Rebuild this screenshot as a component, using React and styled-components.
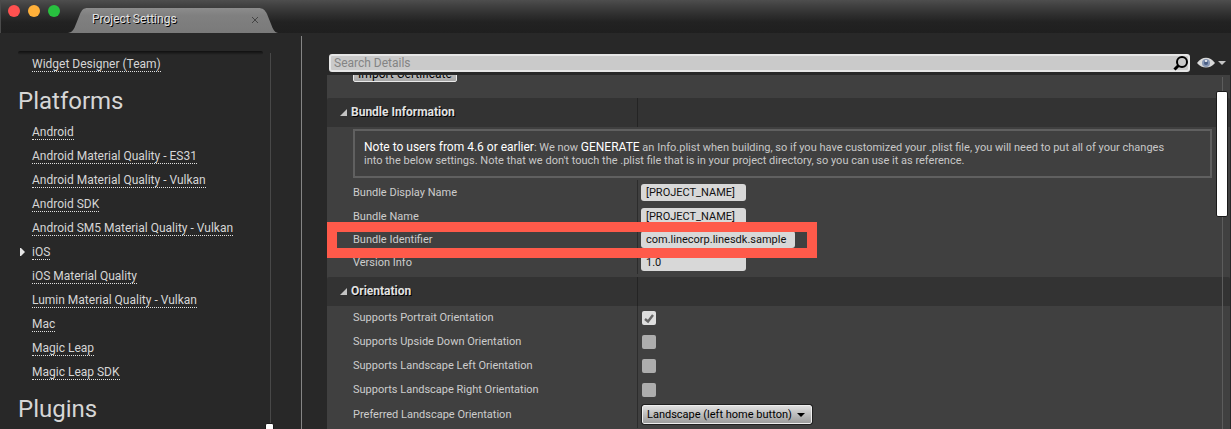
import React from "react";
import styled, { createGlobalStyle } from "styled-components";

const Global = createGlobalStyle`
  * { box-sizing: border-box; }
  body { margin: 0; background: #282828; color: #d6d6d6; font-family: Roboto, "Liberation Sans", sans-serif; font-size: 11px; }
  button, input, select { font: inherit; }
`;

const Window = styled.div`
  min-height: 100vh;
  display: flex;
  flex-direction: column;
  overflow: hidden;
`;

const TitleBar = styled.header`
  height: 33px;
  display: flex;
  align-items: flex-end;
  border-left: 1px solid #4a4a4a;
  background: linear-gradient(#4e4e4e 0, #424242 5px, #303030 14px, #222 22px, #1f1f1f 100%);
`;

const Lights = styled.div`
  align-self: flex-start;
  display: flex;
  gap: 8px;
  width: 67px;
  padding: 5px 0 0 7px;
`;

const Light = styled.button`
  width: 12px;
  height: 12px;
  padding: 0;
  border: 0;
  border-radius: 50%;
  background: ${(p) => p.$color};
`;

const Tab = styled.div`
  position: relative;
  z-index: 0;
  width: 210px;
  height: 25px;
  display: flex;
  align-items: center;
  justify-content: space-between;
  padding: 0 18px 4px 24px;
  color: #e2e2e2;
  font-size: 12px;
  text-shadow: 1px 1px 0 #000;
`;

const TabShape = styled.svg`
  position: absolute;
  inset: 0;
  z-index: -1;
`;

const TabClose = styled.button`
  width: 10px;
  height: 10px;
  margin-top: 2px;
  padding: 2px;
  border: 0;
  background: none;
  display: flex;
`;

const Body = styled.div`
  flex: 1;
  display: flex;
  padding-top: 3px;
`;

const Sidebar = styled.nav`
  position: relative;
  flex: none;
  width: 302px;
  padding: 15px 38px 0 18px;
  border-right: 1px solid #858585;
`;

const ScrollShade = styled.div`
  height: 4px;
  margin-bottom: -3px;
  background: linear-gradient(#101010, #282828);
  border-radius: 2px;
`;

const Heading = styled.h2`
  margin: 0;
  height: 44px;
  padding-top: 11px;
  font-size: 24px;
  font-weight: 400;
  line-height: 28px;
`;

const LinkList = styled.ul`
  list-style: none;
  margin: 0;
  padding: 0;
`;

const LinkRow = styled.li`
  height: 24px;
  display: flex;
  align-items: center;
`;

const Marker = styled.span`
  width: 14px;
  padding-left: 2px;
  display: flex;
`;

const SideLink = styled.a`
  color: inherit;
  font-size: 12px;
  line-height: 14px;
  text-decoration: none;
  border-bottom: 1px dotted #e0e0e0;
`;

const Track = styled.div`
  position: absolute;
  top: ${(p) => p.$top}px;
  bottom: 0;
  right: ${(p) => p.$right}px;
  width: 1px;
  background: ${(p) => p.$color};
`;

const Thumb = styled.div`
  position: absolute;
  left: ${(p) => p.$left}px;
  top: ${(p) => p.$top};
  width: ${(p) => p.$width}px;
  height: 126px;
  background: #fff;
  border: 1px solid #1a1a1a;
  border-radius: 2px;
`;

const Details = styled.main`
  flex: 1;
  min-width: 0;
  display: flex;
  flex-direction: column;
  padding: 18px 1px 0 25px;
`;

const SearchBar = styled.form`
  display: flex;
  align-items: center;
  gap: 7px;
  padding: 0 4px 0 2px;
`;

const SearchBox = styled.label`
  flex: 1;
  height: 18px;
  display: flex;
  align-items: center;
  background: #cacaca;
  border: 2px solid #e6e6e6;
  border-radius: 3px;
`;

const SearchInput = styled.input`
  flex: 1;
  min-width: 0;
  height: 14px;
  padding: 0 3px;
  border: 0;
  background: none;
  font-size: 12px;
  &::placeholder { color: #848484; opacity: 1; }
`;

const ViewButton = styled.button`
  display: flex;
  align-items: center;
  gap: 3px;
  padding: 0;
  border: 0;
  background: none;
`;

const Panel = styled.div`
  position: relative;
  flex: 1;
  margin-top: 3px;
  background: #404040;
`;

const ScrolledRow = styled.div`
  height: 23px;
  display: flex;
  align-items: flex-end;
  padding: 0 26px 16px;
  overflow: hidden;
`;

const ImportButton = styled.button`
  flex: none;
  width: 104px;
  height: 20px;
  padding: 3px 0 0;
  color: #000;
  font-size: 12px;
  line-height: 14px;
  border: 1px solid #e8e8e8;
  border-radius: 2px;
  background: linear-gradient(#d8d8d8, #a6a6a6);
`;

const SectionTitle = styled.h3`
  margin: 0;
  height: 29px;
  display: flex;
  align-items: center;
  background: #333;
  border-radius: 2px 2px 0 0;
  color: #e2e2e2;
  font-size: 12px;
  font-weight: 700;
  text-shadow: 1px 1px 0 #000;
`;

const TitleCell = styled.span`
  width: 311px;
  height: 100%;
  display: flex;
  align-items: center;
  gap: 4px;
  padding: 0 0 1px 13px;
  border-right: 1px solid #242424;
`;

const SectionBody = styled.div`
  padding: ${(p) => p.$pad};
`;

const Note = styled.p`
  margin: 0 18px 2px 26px;
  height: 49px;
  padding: 10px 32px 0 9px;
  border: 2px solid #606060;
  color: #c8c8c8;
  line-height: 13px;
`;

const Strong = styled.strong`
  color: #fff;
  font-size: 12px;
  font-weight: 400;
`;

const Row = styled.div`
  position: relative;
  height: ${(p) => p.$height || 24}px;
  display: flex;
`;

const Name = styled.label`
  width: 311px;
  display: flex;
  align-items: center;
  padding-left: 26px;
  color: #cdcdcd;
  border-right: 1px solid #2c2c2c;
`;

const Value = styled.div`
  display: flex;
  align-items: center;
  padding-left: 3px;
`;

const Field = styled.input`
  width: ${(p) => p.$width}px;
  height: 17px;
  padding: 0 5px;
  border: 0;
  border-radius: 3px;
  background: #d8d8d8;
  color: #111;
`;

const CheckWrap = styled.span`
  position: relative;
  display: flex;
  margin: 1px 0 0 1px;
`;

const Check = styled.input`
  appearance: none;
  width: 14px;
  height: 14px;
  margin: 0;
  border-radius: 2px;
  background: #adadad;
  &:checked { background: #dedede; }
  & + svg { display: none; }
  &:checked + svg { display: block; }
`;

const CheckMark = styled.svg`
  position: absolute;
  inset: 0;
  pointer-events: none;
`;

const SelectWrap = styled.span`
  position: relative;
  display: flex;
  margin-left: 1px;
`;

const Select = styled.select`
  appearance: none;
  width: 170px;
  height: 19px;
  padding: 0 0 0 4px;
  border: 1px solid #eee;
  border-radius: 2px;
  outline: 1px solid #1f1f1f;
  background: linear-gradient(#dedede, #9c9c9c);
  color: #000;
`;

const SelectArrow = styled.svg`
  position: absolute;
  right: 7px;
  top: 8px;
  pointer-events: none;
`;

const Highlight = styled.div`
  position: absolute;
  left: 0;
  top: -6px;
  bottom: -7px;
  width: 490px;
  border: 10px solid #ff5a4a;
  pointer-events: none;
  z-index: 1;
`;

const platforms = [
  "Android",
  "Android Material Quality - ES31",
  "Android Material Quality - Vulkan",
  "Android SDK",
  "Android SM5 Material Quality - Vulkan",
  "iOS",
  "iOS Material Quality",
  "Lumin Material Quality - Vulkan",
  "Mac",
  "Magic Leap",
  "Magic Leap SDK",
];

const bundle = [
  { id: "display", label: "Bundle Display Name", value: "[PROJECT_NAME]", width: 105, height: 24 },
  { id: "name", label: "Bundle Name", value: "[PROJECT_NAME]", width: 105, height: 24 },
  { id: "identifier", label: "Bundle Identifier", value: "com.linecorp.linesdk.sample", width: 154, height: 23, marked: true },
  { id: "version", label: "Version Info", value: "1.0", width: 105, height: 23 },
];

const orientations = [
  { id: "portrait", label: "Supports Portrait Orientation", on: true, height: 23 },
  { id: "upside", label: "Supports Upside Down Orientation" },
  { id: "left", label: "Supports Landscape Left Orientation" },
  { id: "right", label: "Supports Landscape Right Orientation" },
];

function NavLink({ label, active }) {
  return (
    <LinkRow>
      <Marker>
        {active && (
          <svg width="5" height="8" viewBox="0 0 5 8"><path d="M0 0h1l4 4-4 4H0z" fill="#e6e6e6" /></svg>
        )}
      </Marker>
      <SideLink href="#" aria-current={active ? "page" : undefined}>{label}</SideLink>
    </LinkRow>
  );
}

function Section({ title, pad, children }) {
  return (
    <section>
      <SectionTitle>
        <TitleCell>
          <svg width="7" height="7" viewBox="0 0 7 7"><path d="M7 0v7H0z" fill="#c4c4c4" /></svg>
          {title}
        </TitleCell>
      </SectionTitle>
      <SectionBody $pad={pad}>{children}</SectionBody>
    </section>
  );
}

export default function App() {
  return (
    <Window>
      <Global />
      <TitleBar>
        <Lights>
          <Light $color="#ff5150" aria-label="Close" />
          <Light $color="#ffb03a" aria-label="Minimize" />
          <Light $color="#28c13f" aria-label="Zoom" />
        </Lights>
        <Tab>
          <TabShape width="210" height="25" viewBox="0 0 210 25">
            <defs>
              <linearGradient id="tab" x1="0" y1="0" x2="0" y2="1">
                <stop offset="0" stopColor="#8c8c8c" />
                <stop offset="0.3" stopColor="#808080" />
                <stop offset="1" stopColor="#7a7a7a" />
              </linearGradient>
            </defs>
            <path d="M0 25C5 24 6 21 8 16L12 6C14 2 15 0 20 0H190C195 0 197 2 199 6L203 16C205 21 206 24 210 25Z" fill="url(#tab)" />
          </TabShape>
          Project Settings
          <TabClose aria-label="Close tab">
            <svg width="6" height="6" viewBox="0 0 6 6"><path d="M0 0L6 6M6 0L0 6" stroke="#444" /></svg>
          </TabClose>
        </Tab>
      </TitleBar>
      <Body>
        <Sidebar>
          <ScrollShade />
          <LinkList><NavLink label="Widget Designer (Team)" /></LinkList>
          <Heading>Platforms</Heading>
          <LinkList>
            {platforms.map((p) => <NavLink key={p} label={p} active={p === "iOS"} />)}
          </LinkList>
          <Heading>Plugins</Heading>
          <Track $top={17} $right={30} $color="#484848"><Thumb $top="calc(100% - 6px)" $left={-5} $width={9} /></Track>
        </Sidebar>
        <Details>
          <SearchBar>
            <SearchBox>
              <SearchInput type="text" placeholder="Search Details" aria-label="Search Details" />
              <svg width="15" height="15" viewBox="0 0 15 15" fill="none" stroke="#000">
                <circle cx="9" cy="6" r="5" strokeWidth="2" /><path d="M5.5 9.5L1.5 13.5" strokeWidth="3" />
              </svg>
            </SearchBox>
            <ViewButton type="button" aria-label="View options">
              <svg width="18" height="12" viewBox="0 0 18 12">
                <path d="M0 6C5-1 13-1 18 6C13 12 5 12 0 6Z" fill="#dadada" />
                <circle cx="9" cy="6" r="4" fill="#8797b4" /><circle cx="9" cy="6" r="2" fill="#485d84" /><circle cx="9" cy="4" r="1" fill="#fff" />
              </svg>
              <svg width="8" height="4" viewBox="0 0 8 4"><path d="M0 0h8L4 4z" fill="#c4c4c4" /></svg>
            </ViewButton>
          </SearchBar>
          <Panel>
            <ScrolledRow><ImportButton>Import Certificate</ImportButton></ScrolledRow>
            <Section title="Bundle Information" pad="2px 0 3px">
              <Note>
                <Strong>Note to users from 4.6 or earlier</Strong>: We now <Strong>GENERATE</Strong> an Info.plist when building, so if you have customized your .plist file, you will need to put all of your changes into the below settings. Note that we don't touch the .plist file that is in your project directory, so you can use it as reference.
              </Note>
              {bundle.map((b) => (
                <Row key={b.id} $height={b.height}>
                  <Name htmlFor={b.id}>{b.label}</Name>
                  <Value><Field id={b.id} type="text" defaultValue={b.value} $width={b.width} /></Value>
                  {b.marked && <Highlight />}
                </Row>
              ))}
            </Section>
            <Section title="Orientation" pad="0">
              {orientations.map((o) => (
                <Row key={o.id} $height={o.height}>
                  <Name htmlFor={o.id}>{o.label}</Name>
                  <Value>
                    <CheckWrap>
                      <Check id={o.id} type="checkbox" defaultChecked={o.on} />
                      <CheckMark width="14" height="14" viewBox="0 0 14 14"><path d="M3 8L6 10.5L11 4" fill="none" stroke="#666" strokeWidth="2.4" /></CheckMark>
                    </CheckWrap>
                  </Value>
                </Row>
              ))}
              <Row $height={27}>
                <Name htmlFor="preferred">Preferred Landscape Orientation</Name>
                <Value>
                  <SelectWrap>
                    <Select id="preferred"><option>Landscape (left home button)</option></Select>
                    <SelectArrow width="8" height="4" viewBox="0 0 8 4"><path d="M0 0h8L4 4z" fill="#000" /></SelectArrow>
                  </SelectWrap>
                </Value>
              </Row>
            </Section>
            <Track $top={2} $right={7} $color="#5c5c5c"><Thumb $top="14px" $left={-6} $width={12} /></Track>
          </Panel>
        </Details>
      </Body>
    </Window>
  );
}
